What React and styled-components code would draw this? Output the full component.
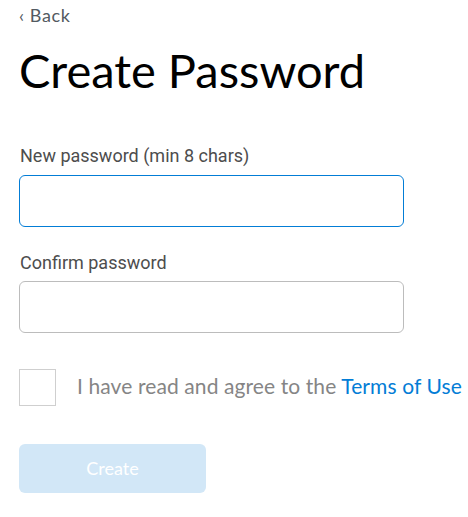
import React, { useState } from "react";
import styled, { createGlobalStyle } from "styled-components";

const GlobalStyle = createGlobalStyle`
  body {
    margin: 0;
    background: #ffffff;
    font-family: Lato, "Liberation Sans", sans-serif;
  }
`;

const Page = styled.div`
  padding: 0 19px;
  display: flex;
  flex-direction: column;
`;

const BackLink = styled.a`
  font-size: 18px;
  line-height: 22px;
  letter-spacing: 0.6px;
  padding-top: 4px;
  color: #535a61;
  cursor: pointer;
  align-self: flex-start;
`;

const Title = styled.h1`
  margin: 16px 0 0;
  font-size: 47px;
  font-weight: 400;
  line-height: 56px;
  color: #000000;
`;

const Field = styled.div`
  display: flex;
  flex-direction: column;
  margin-top: ${(p) => p.gap}px;
`;

const Label = styled.label`
  font-family: Roboto, sans-serif;
  font-size: 18px;
  line-height: 24px;
  color: #4d4d4d;
  padding-left: 1px;
  margin-bottom: 6.5px;
`;

const Input = styled.input`
  box-sizing: border-box;
  width: 385px;
  height: 52px;
  border: 1px solid ${(p) => (p.focused ? "#037dd6" : "#bcbcbc")};
  border-radius: 6px;
  padding: 0 14px;
  font-size: 16px;
  outline: none;
`;

const AgreeRow = styled.div`
  display: flex;
  align-items: center;
  gap: 21px;
  margin-top: 35.5px;
`;

const Box = styled.div`
  box-sizing: border-box;
  width: 37px;
  height: 37px;
  border: 1px solid #cfcfcf;
  flex-shrink: 0;
`;

const AgreeText = styled.span`
  font-size: 21px;
  letter-spacing: 0.1px;
  padding-bottom: 3px;
  color: #858585;
  white-space: nowrap;
`;

const TermsLink = styled.span`
  color: #037dd6;
`;

const CreateButton = styled.button`
  margin-top: 38px;
  width: 187px;
  height: 49px;
  border: none;
  border-radius: 6px;
  background: #d2e7f7;
  color: #ffffff;
  font-family: Lato, sans-serif;
  font-size: 18px;
  cursor: default;
`;

export default function App() {
  const [pw, setPw] = useState("");
  const [confirm, setConfirm] = useState("");
  return (
    <>
      <GlobalStyle />
      <Page>
        <BackLink>‹ Back</BackLink>
        <Title>Create Password</Title>
        <Field gap={46}>
          <Label>New password (min 8 chars)</Label>
          <Input type="password" focused value={pw} onChange={(e) => setPw(e.target.value)} />
        </Field>
        <Field gap={24}>
          <Label>Confirm password</Label>
          <Input type="password" value={confirm} onChange={(e) => setConfirm(e.target.value)} />
        </Field>
        <AgreeRow>
          <Box />
          <AgreeText>
            I have read and agree to the <TermsLink>Terms of Use</TermsLink>
          </AgreeText>
        </AgreeRow>
        <CreateButton disabled>Create</CreateButton>
      </Page>
    </>
  );
}
